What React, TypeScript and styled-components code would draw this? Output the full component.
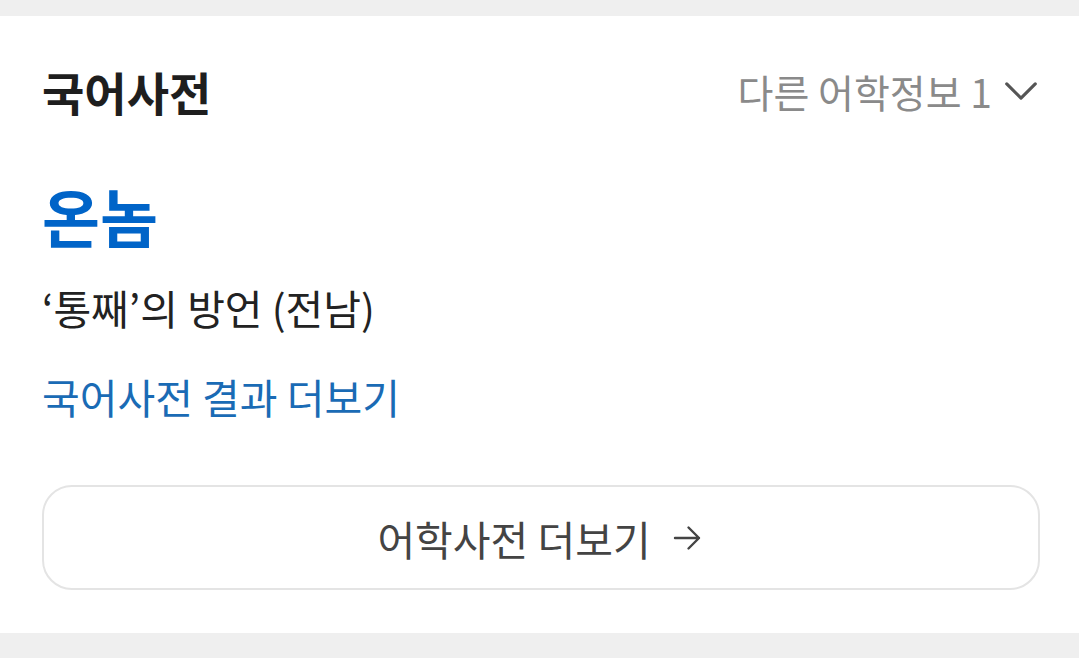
import { createGlobalStyle, styled } from 'styled-components';

const GlobalStyle = createGlobalStyle`
	html, body {
		margin: 0;
		padding: 0;
		background: #efefef;
	}
	body {
		font-family: 'Noto Sans CJK KR', 'Noto Sans', sans-serif;
	}
`;

const Page = styled.div`
	padding: 16px 0 25px;
	width: 1079px;
	height: 658px;
	box-sizing: border-box;
`;

const Card = styled.section`
	display: flex;
	flex-direction: column;
	padding: 0 39px 0 42px;
	height: 617px;
	box-sizing: border-box;
	background: #fff;
`;

const Header = styled.div`
	display: flex;
	justify-content: space-between;
	align-items: center;
	margin-top: 51px;
	height: 48px;
	h2 {
		margin: 0;
		font-size: 46px;
		font-weight: 700;
		color: #1e1e1e;
		line-height: 48px;
	}
`;

const Toggle = styled.button`
	display: flex;
	align-items: center;
	gap: 10px;
	padding: 0;
	border: none;
	background: none;
	font-family: inherit;
	font-size: 39px;
	color: #8a8a8a;
	line-height: 48px;
	svg {
		width: 38px;
		height: 38px;
	}
`;

const Word = styled.h1`
	margin: 65px 0 0;
	font-size: 63px;
	font-weight: 700;
	color: #0064c8;
	line-height: 70px;
`;

const Meaning = styled.p`
	margin: 30px 0 0;
	font-size: 41px;
	color: #222;
	line-height: 54px;
`;

const MoreLink = styled.a`
	margin-top: 35px;
	font-size: 41px;
	color: #1a6bb5;
	line-height: 54px;
	text-decoration: none;
`;

const MoreButton = styled.button`
	display: flex;
	justify-content: center;
	align-items: center;
	gap: 18px;
	margin-top: 62px;
	width: 100%;
	height: 105px;
	border: 2px solid #e4e4e4;
	border-radius: 30px;
	background: #fff;
	font-family: inherit;
	font-size: 41px;
	color: #444;
	svg {
		width: 36px;
		height: 36px;
	}
`;

const App = () => {
	return (
		<Page>
			<GlobalStyle />
			<Card>
				<Header>
					<h2>국어사전</h2>
					<Toggle>
						다른 어학정보 1
						<svg viewBox="0 0 24 24" fill="none" stroke="#555" strokeWidth="2" strokeLinecap="round" strokeLinejoin="round">
							<path d="M3 7.5l9 9 9-9" />
						</svg>
					</Toggle>
				</Header>
				<Word>온놈</Word>
				<Meaning>‘통째’의 방언 (전남)</Meaning>
				<MoreLink href="#">국어사전 결과 더보기</MoreLink>
				<MoreButton>
					어학사전 더보기
					<svg viewBox="0 0 24 24" fill="none" stroke="#444" strokeWidth="1.6" strokeLinecap="round" strokeLinejoin="round">
						<path d="M4 12h16M13 5l7 7-7 7" />
					</svg>
				</MoreButton>
			</Card>
		</Page>
	);
};

export default App;
